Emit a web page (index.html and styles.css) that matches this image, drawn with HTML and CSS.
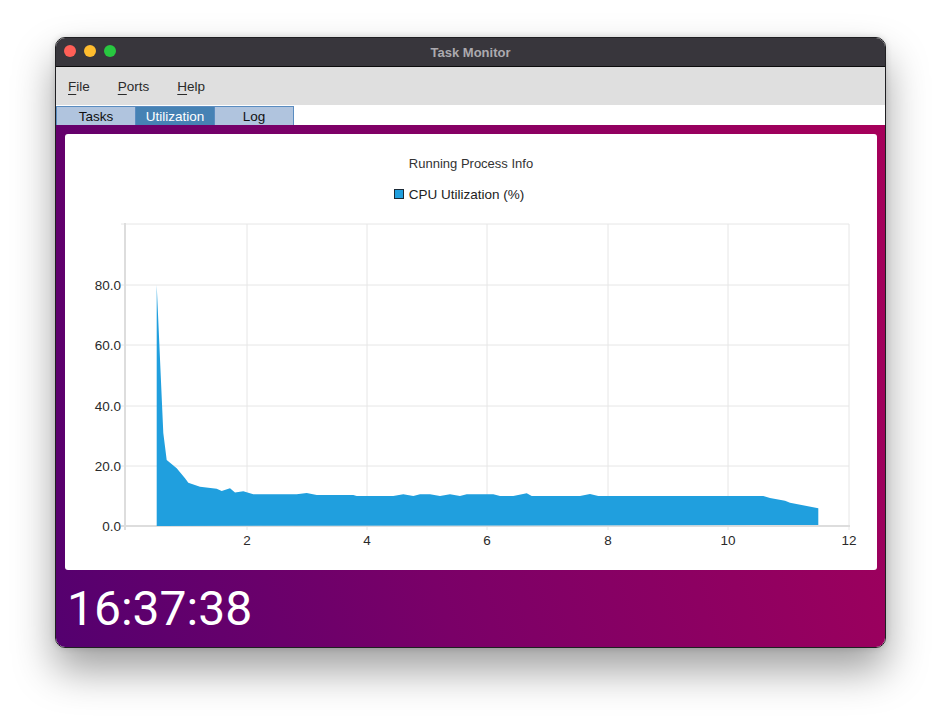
FILE: index.html
```html
<!DOCTYPE html>
<html>
<head>
<meta charset="utf-8">
<link rel="stylesheet" href="styles.css">
</head>
<body>
<div class="window">
  <div class="titlebar">
    <div class="lights">
      <span class="light red"></span>
      <span class="light yellow"></span>
      <span class="light green"></span>
    </div>
    <div class="title">Task Monitor</div>
  </div>
  <div class="menubar">
    <span class="menu"><u>F</u>ile</span>
    <span class="menu"><u>P</u>orts</span>
    <span class="menu"><u>H</u>elp</span>
  </div>
  <div class="tabs">
    <div class="tab">Tasks</div>
    <div class="tab active">Utilization</div>
    <div class="tab">Log</div>
  </div>
  <div class="content">
    <div class="panel">
      <div class="chart-title">Running Process Info</div>
      <div class="legend"><span class="swatch"></span><span>CPU Utilization (%)</span></div>
      <svg class="plot" width="812" height="356" viewBox="0 0 812 356">
        <g class="grid">
          <line x1="56" y1="10" x2="784" y2="10"/>
          <line x1="56" y1="71" x2="784" y2="71"/>
          <line x1="56" y1="131" x2="784" y2="131"/>
          <line x1="56" y1="192" x2="784" y2="192"/>
          <line x1="56" y1="252" x2="784" y2="252"/>
          <line x1="182" y1="10" x2="182" y2="316"/>
          <line x1="302" y1="10" x2="302" y2="316"/>
          <line x1="422" y1="10" x2="422" y2="316"/>
          <line x1="543" y1="10" x2="543" y2="316"/>
          <line x1="663" y1="10" x2="663" y2="316"/>
          <line x1="784" y1="10" x2="784" y2="316"/>
        </g>
        <g class="axis">
          <line x1="60" y1="9" x2="60" y2="316"/>
          <line x1="56" y1="312" x2="785" y2="312"/>
        </g>
        <polygon class="area" points="91.7,312 91.7,71 98.3,219 101.7,246 111.7,254.3 120,264.3 123.3,268.7 135,272.7 151.7,274.7 156.7,277 165,274.3 170,278.5 178.3,277.3 188.3,280.3 231.7,280.3 241.7,279 251.7,281 288.3,281 291.7,282 328.3,282 338.3,280.3 348.3,282 355,280.3 365,280.3 375,282 385,280.3 395,282 401.7,280.3 428.3,280.3 435,282 448.3,282 461.7,279.3 466.7,282 515,282 525,280 533.3,282 698.3,282 705,284 720,286.7 725,288.7 753.3,294.3 753.3,311"/>
        <g class="ylabels">
          <text x="56" y="76">80.0</text>
          <text x="56" y="136">60.0</text>
          <text x="56" y="197">40.0</text>
          <text x="56" y="257">20.0</text>
          <text x="56" y="317">0.0</text>
        </g>
        <g class="xlabels">
          <text x="182" y="331">2</text>
          <text x="302" y="331">4</text>
          <text x="422" y="331">6</text>
          <text x="543" y="331">8</text>
          <text x="663" y="331">10</text>
          <text x="784" y="331">12</text>
        </g>
      </svg>
    </div>
    <div class="clock">16:37:38</div>
  </div>
</div>
</body>
</html>
```

FILE: styles.css
```css
html, body {
  margin: 0;
  padding: 0;
  background: #ffffff;
}
body {
  font-family: "Liberation Sans", Arial, sans-serif;
  width: 942px;
  height: 722px;
  overflow: hidden;
}
.window {
  box-sizing: border-box;
  width: 831px;
  height: 611px;
  margin: 37px 0 0 55px;
  border: 1px solid #1f1f22;
  border-radius: 10px;
  overflow: hidden;
  display: flex;
  flex-direction: column;
  box-shadow: 0 22px 42px rgba(0, 0, 0, 0.38), 0 0 6px rgba(0, 0, 0, 0.15);
}
.titlebar {
  height: 28px;
  flex: none;
  background: #38363c;
  border-bottom: 1px solid #0c0c0c;
  position: relative;
  display: flex;
  align-items: center;
  justify-content: center;
}
.lights {
  position: absolute;
  left: 8px;
  top: 7px;
  display: flex;
  gap: 8px;
}
.light {
  width: 12px;
  height: 12px;
  border-radius: 50%;
  display: block;
}
.red { background: #fe5f57; }
.yellow { background: #febc2e; }
.green { background: #28c840; }
.title {
  color: #acaaaf;
  font-weight: bold;
  font-size: 13px;
}
.menubar {
  height: 38px;
  flex: none;
  background: #dfdfdf;
  display: flex;
  align-items: center;
  gap: 28px;
  padding-left: 12px;
  font-size: 13.5px;
  color: #2a2a2a;
}
.menu u {
  text-decoration: underline;
  text-underline-offset: 3px;
}
.tabs {
  height: 20px;
  flex: none;
  background: #ffffff;
  display: flex;
  align-items: flex-end;
}
.tab {
  box-sizing: border-box;
  width: 80px;
  height: 19px;
  background: #b0c4de;
  border: 1px solid #5a8cc0;
  border-bottom: none;
  margin-right: -1px;
  display: flex;
  align-items: center;
  justify-content: center;
  font-size: 13.5px;
  color: #111;
}
.tab.active {
  background: #4682b4;
  color: #ffffff;
}
.content {
  flex: 1;
  background: linear-gradient(72deg, #54006f 0%, #7a0068 40%, #a6005a 100%);
  padding: 9px 8px 0 9px;
  display: flex;
  flex-direction: column;
}
.panel {
  height: 436px;
  flex: none;
  background: #ffffff;
  border-radius: 3px;
  display: flex;
  flex-direction: column;
  color: #333;
}
.chart-title {
  margin-top: 22px;
  height: 16px;
  line-height: 16px;
  text-align: center;
  font-size: 13px;
  color: #333;
}
.legend {
  margin-top: 14px;
  height: 16px;
  display: flex;
  align-items: center;
  justify-content: center;
  gap: 5px;
  padding-right: 24px;
  font-size: 13.5px;
  color: #222;
}
.swatch {
  box-sizing: border-box;
  width: 10px;
  height: 10px;
  background: #209fde;
  border: 1px solid #1c2a36;
  display: block;
}
.plot {
  margin-top: 12px;
  display: block;
}
.grid line {
  stroke: #e6e6e6;
  stroke-width: 1;
}
.axis line {
  stroke: #dddddd;
  stroke-width: 2;
}
.area {
  fill: #209fde;
}
.ylabels text {
  font-family: "Liberation Sans", Arial, sans-serif;
  font-size: 13.5px;
  fill: #2a2a2a;
  text-anchor: end;
}
.xlabels text {
  font-family: "Liberation Sans", Arial, sans-serif;
  font-size: 13.5px;
  fill: #2a2a2a;
  text-anchor: middle;
}
.clock {
  flex: 1;
  display: flex;
  align-items: center;
  padding-left: 2px;
  font-family: Roboto, "Liberation Sans", sans-serif;
  font-weight: 400;
  font-size: 48px;
  color: #ffffff;
}
```
